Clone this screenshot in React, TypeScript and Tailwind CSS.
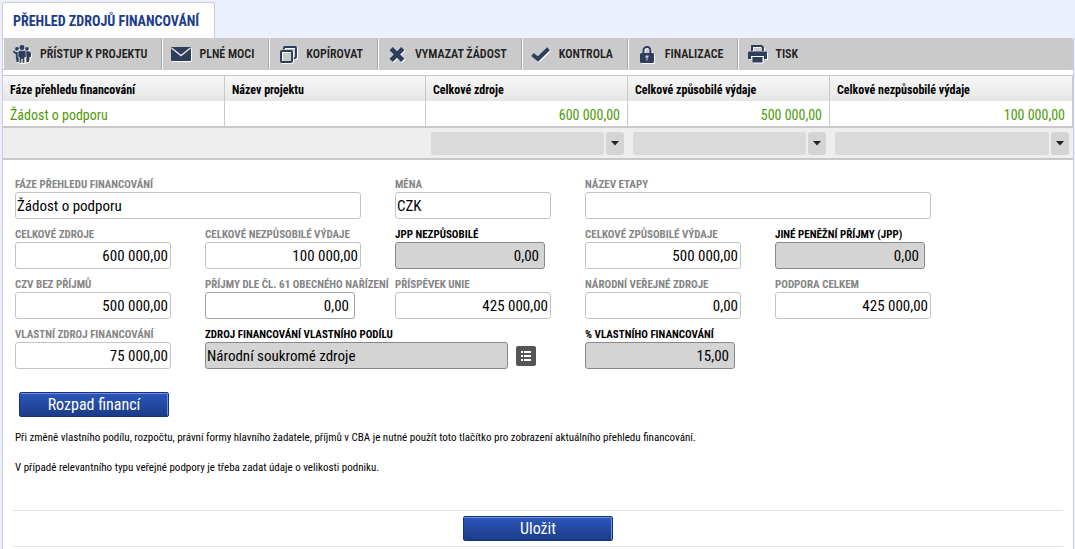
import { useId, type ReactNode } from "react"
import clsx from "clsx"

const navy = "#2d3e5c"

const GroupIcon = () => (
  <svg width="18" height="18" viewBox="0 0 18 18" fill={navy}>
    <circle cx="4" cy="3.800" r="1.900" />
    <circle cx="14" cy="3.800" r="1.900" />
    <path d="M0 6.200l1-.6L2.600 7h3.900v4.500H5.800V17H3.600l-.8-5.500V9.200L.8 8z" />
    <path d="M11.500 6.300h4.700L18 8v4h-1.300v-1l-.6 6h-2.700v-5.500h-1.900z" />
    <path d="M6.300 5.600h5.400l1.300 1.300v5.600h-1.400V18H9.400v-4h-.8v4H6.400v-5.500H5V6.900z" stroke="#cacaca" strokeWidth="0.700" />
    <circle cx="9" cy="2.600" r="2.500" />
  </svg>
)

const MailIcon = () => (
  <svg width="20" height="14" viewBox="0 0 20 14">
    <rect x="0" y="0" width="20" height="14" rx="1" fill={navy} />
    <path d="M0.500 1L10 8.500l9.500-7.500" fill="none" stroke="#e6e6e6" strokeWidth="1.400" />
  </svg>
)

const CopyIcon = () => (
  <svg width="17" height="17" viewBox="0 0 17 17" fill="none" stroke={navy} strokeWidth="2">
    <rect x="1" y="5" width="11" height="11" rx="1" />
    <path d="M4 3.500V2q0-1 1-1h10q1 0 1 1v9q0 1-1 1h-1" />
  </svg>
)

const CrossIcon = () => (
  <svg width="16" height="15" viewBox="0 0 16 15">
    <path d="M2.200 1.700L13.800 13.300M13.800 1.700L2.200 13.300" stroke={navy} strokeWidth="4.600" />
  </svg>
)

const CheckIcon = () => (
  <svg width="19" height="15" viewBox="0 0 19 15">
    <path d="M1.500 7.500L7 12L17.500 1.800" fill="none" stroke={navy} strokeWidth="4" />
  </svg>
)

const LockIcon = () => (
  <svg width="14" height="17" viewBox="0 0 14 17">
    <path d="M3.500 8V4.500a3.500 3.500 0 0 1 7 0V8" fill="none" stroke={navy} strokeWidth="2" />
    <rect x="0" y="7" width="14" height="10" rx="1.500" fill={navy} />
    <path d="M5.500 9.500h3v2h-1v3h-1v-3h-1z" fill="#ccc" />
  </svg>
)

const PrintIcon = () => (
  <svg width="19" height="18" viewBox="0 0 19 18">
    <path d="M4 6V1h9.500L15 2.500V6" fill="none" stroke={navy} strokeWidth="2" />
    <path d="M1 6.500h17l1 1V14h-3v-3H3v3H0V7.500z" fill={navy} />
    <path d="M4.500 12h10v5.500h-10z" fill={navy} />
  </svg>
)

const ListIcon = () => (
  <svg width="10" height="10" viewBox="0 0 10 10" fill="#fff">
    <path d="M0 0h2v2H0zM3 0h7v2H3zM0 4h2v2H0zM3 4h7v2H3zM0 8h2v2H0zM3 8h7v2H3z" />
  </svg>
)

const actions: { label: string; icon: ReactNode }[] = [
  { label: "PŘÍSTUP K PROJEKTU", icon: <GroupIcon /> },
  { label: "PLNÉ MOCI", icon: <MailIcon /> },
  { label: "KOPÍROVAT", icon: <CopyIcon /> },
  { label: "VYMAZAT ŽÁDOST", icon: <CrossIcon /> },
  { label: "KONTROLA", icon: <CheckIcon /> },
  { label: "FINALIZACE", icon: <LockIcon /> },
  { label: "TISK", icon: <PrintIcon /> },
]

const columns = [
  { title: "Fáze přehledu financování", value: "Žádost o podporu", width: "w-[222px]" },
  { title: "Název projektu", value: "", width: "w-[201px]" },
  { title: "Celkové zdroje", value: "600 000,00", width: "w-[202px]", numeric: true },
  { title: "Celkové způsobilé výdaje", value: "500 000,00", width: "w-[202px]", numeric: true },
  { title: "Celkové nezpůsobilé výdaje", value: "100 000,00", width: "", numeric: true },
]

type FieldProps = {
  label: string
  value: string
  kind?: "plain" | "editable" | "required"
  numeric?: boolean
  className?: string
  width?: string
  children?: ReactNode
}

function Field({ label, value, kind = "plain", numeric, className, width = "w-[156px]", children }: FieldProps) {
  const id = useId()
  return (
    <div className={className}>
      <label
        htmlFor={id}
        className={clsx(
          "block text-[11px] leading-[14px] font-bold whitespace-nowrap",
          kind === "required" ? "text-black" : "text-[#858585]"
        )}
      >
        {label}
      </label>
      <div className="flex items-center gap-2">
        <input
          id={id}
          type="text"
          defaultValue={value}
          readOnly={kind === "plain"}
          className={clsx(
            "h-[27px] rounded-[3px] border text-[15px] text-black",
            width,
            kind === "plain" && "border-[#c4c4c4] bg-white",
            kind === "editable" && "border-[#a0a0a0] bg-white",
            kind === "required" && "border-[#888] bg-[#d4d4d4]",
            numeric ? "pl-1 text-right" : "px-px",
            numeric && (kind === "plain" ? "pr-0.5" : "pr-[5px]")
          )}
        />
        {children}
      </div>
    </div>
  )
}

const blueButton =
  "h-[25px] w-[150px] rounded-[2px] border border-[#17357f] bg-linear-to-b from-[#2c57bd] to-[#1b3c88] text-base leading-5 text-white shadow-[inset_-1px_1px_0_#6f8fd6]"

export default function App() {
  return (
    <div className="min-h-screen bg-[#ecf0fc] pt-0.5 pr-px pl-0.5 text-black [font-family:'Roboto_Condensed','Liberation_Sans_Narrow',Roboto,sans-serif]">
      {/* Tab */}
      <nav className="flex">
        <a
          href="#prehled"
          className="flex h-9 items-center rounded-t-[3px] border border-b-0 border-[#ccc] bg-white pr-[15px] pl-2.5 text-sm font-bold text-[#1c3c88]"
        >
          PŘEHLED ZDROJŮ FINANCOVÁNÍ
        </a>
      </nav>

      <main className="min-h-[511px] border-x border-[#cccddb] bg-white">
        {/* Toolbar */}
        <div className="flex h-8 rounded-tr-[2px] bg-[#cacaca] py-px">
          {actions.map((action, i) => (
            <button
              key={action.label}
              type="button"
              className={clsx(
                "flex items-center gap-2 border-l border-white pr-3.5 pl-2 text-xs font-semibold text-[#222]",
                i < actions.length - 1 && "border-r border-r-[#aaa]"
              )}
            >
              <span className="flex w-5 justify-center drop-shadow-[1px_1px_0_#fff]">{action.icon}</span>
              {action.label}
            </button>
          ))}
        </div>

        {/* Overview table */}
        <table className="mt-[5px] w-full table-fixed border-separate border-spacing-0 border-t border-[#c9c9c9]">
          <colgroup>
            {columns.map(col => (
              <col key={col.title} className={col.width} />
            ))}
          </colgroup>
          <thead>
            <tr className="h-[25px] bg-linear-to-b from-[#f8f8f8] to-[#e6e6e6]">
              {columns.map(col => (
                <th key={col.title} className="border-r border-[#c9c9c9] p-0 pt-0.5 pl-[7px] text-left text-xs font-bold">
                  {col.title}
                </th>
              ))}
            </tr>
          </thead>
          <tbody>
            <tr className="h-[27px]">
              {columns.map(col => (
                <td
                  key={col.title}
                  className={clsx(
                    "border-r border-b-2 border-[#c9c9c9] px-[7px] pt-0.5 pb-0 text-sm text-[#4e9a06]",
                    col.numeric && "text-right"
                  )}
                >
                  {col.value}
                </td>
              ))}
            </tr>
          </tbody>
          <tfoot>
            <tr className="h-8 bg-[#eee]">
              {columns.map(col => (
                <td key={col.title} className="border-b-2 border-[#c9c9c9] p-0 pr-1 pl-[5px]">
                  {col.numeric && (
                    <div className="flex gap-0.5">
                      <input
                        type="text"
                        aria-label={col.title}
                        className="h-[23px] min-w-0 flex-1 rounded-[3px] bg-[#dadada] px-1 text-sm"
                      />
                      <button
                        type="button"
                        aria-label={`${col.title} – filtr`}
                        className="flex h-[23px] w-[18px] items-center justify-center rounded-[3px] bg-[#d4d4d4]"
                      >
                        <svg width="8" height="5" viewBox="0 0 8 5" fill="#222">
                          <path d="M0 0h8L4 4.500z" />
                        </svg>
                      </button>
                    </div>
                  )}
                </td>
              ))}
            </tr>
          </tfoot>
        </table>

        {/* Detail form */}
        <form className="px-2.5 pt-[18px]" onSubmit={e => e.preventDefault()}>
          <div className="px-0.5">
            <div className="grid grid-cols-[repeat(5,190px)] gap-y-[9px]">
              <Field label="FÁZE PŘEHLEDU FINANCOVÁNÍ" value="Žádost o podporu" className="col-span-2" width="w-[346px]" />
              <Field label="MĚNA" value="CZK" />
              <Field label="NÁZEV ETAPY" value="" className="col-span-2" width="w-[346px]" />

              <Field label="CELKOVÉ ZDROJE" value="600 000,00" numeric />
              <Field label="CELKOVÉ NEZPŮSOBILÉ VÝDAJE" value="100 000,00" numeric />
              <Field label="JPP NEZPŮSOBILÉ" value="0,00" numeric kind="required" width="w-[150px]" />
              <Field label="CELKOVÉ ZPŮSOBILÉ VÝDAJE" value="500 000,00" numeric />
              <Field label="JINÉ PENĚŽNÍ PŘÍJMY (JPP)" value="0,00" numeric kind="required" width="w-[150px]" />

              <Field label="CZV BEZ PŘÍJMŮ" value="500 000,00" numeric />
              <Field label="PŘÍJMY DLE ČL. 61 OBECNÉHO NAŘÍZENÍ" value="0,00" numeric kind="editable" width="w-[150px]" />
              <Field label="PŘÍSPĚVEK UNIE" value="425 000,00" numeric />
              <Field label="NÁRODNÍ VEŘEJNÉ ZDROJE" value="0,00" numeric />
              <Field label="PODPORA CELKEM" value="425 000,00" numeric />

              <Field label="VLASTNÍ ZDROJ FINANCOVÁNÍ" value="75 000,00" numeric />
              <Field
                label="ZDROJ FINANCOVÁNÍ VLASTNÍHO PODÍLU"
                value="Národní soukromé zdroje"
                kind="required"
                className="col-span-2"
                width="w-[303px]"
              >
                <button
                  type="button"
                  aria-label="Vybrat ze seznamu"
                  className="flex size-5 items-center justify-center rounded-[2px] bg-[#555]"
                >
                  <ListIcon />
                </button>
              </Field>
              <Field label="% VLASTNÍHO FINANCOVÁNÍ" value="15,00" numeric kind="required" width="w-[150px]" />
            </div>

            <button type="button" className={clsx(blueButton, "mt-[23px] ml-1 block")}>
              Rozpad financí
            </button>
            <div className="mt-[13px] space-y-[14px] text-[11px] leading-4">
              <p>
                Při změně vlastního podílu, rozpočtu, právní formy hlavního žadatele, příjmů v CBA je nutné použít toto
                tlačítko pro zobrazení aktuálního přehledu financování.
              </p>
              <p>V případě relevantního typu veřejné podpory je třeba zadat údaje o velikosti podniku.</p>
            </div>
          </div>

          <div className="mt-[34px] flex h-[37px] items-center justify-center border-y border-[#e4e4e4]">
            <button type="submit" className={blueButton}>
              Uložit
            </button>
          </div>
        </form>
      </main>
    </div>
  )
}
